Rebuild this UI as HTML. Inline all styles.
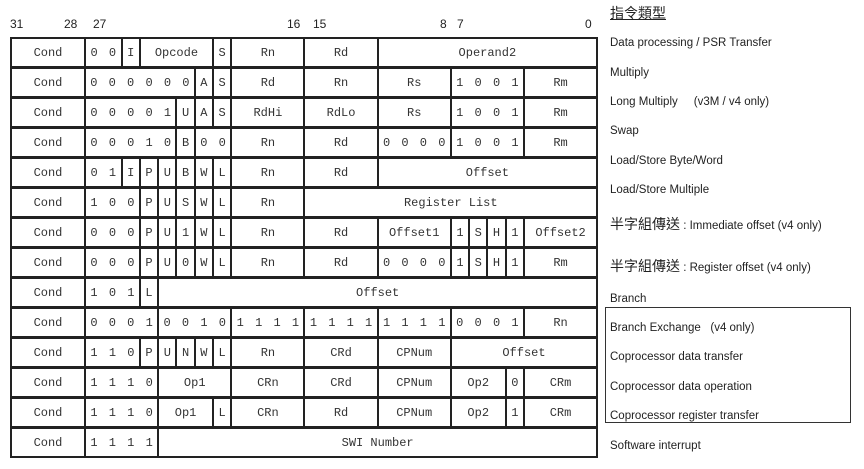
<!DOCTYPE html>
<html><head><meta charset="utf-8">
<style>
*{margin:0;padding:0;box-sizing:border-box}
body{width:864px;height:469px;background:#fff;position:relative;overflow:hidden;font-family:"Liberation Mono",monospace;color:#222}
.r{position:absolute;left:0;width:600px;height:31px}
.c{position:absolute;top:0;height:31px;border:2px solid #222;left:calc(85px + var(--a)*18.29px - 1px);width:calc((var(--b) - var(--a))*18.29px + 2px);display:flex;align-items:center;justify-content:center;font-size:12px;white-space:pre;color:#333}
.b{letter-spacing:2px;padding-left:2px}
.h{position:absolute;top:17px;font-family:"Liberation Sans",sans-serif;font-size:12px;color:#222}
.l{position:absolute;left:610px;font-family:"Liberation Sans","Noto Sans CJK TC",sans-serif;font-size:11.5px;color:#222;white-space:pre;line-height:14px}
.cj{font-size:14px}
</style></head><body>
<div class="h" style="left:10px">31</div>
<div class="h" style="left:64px">28</div>
<div class="h" style="left:93px">27</div>
<div class="h" style="left:287px">16</div>
<div class="h" style="left:313px">15</div>
<div class="h" style="left:440px">8</div>
<div class="h" style="left:457px">7</div>
<div class="h" style="left:585px">0</div>

<div class="r" style="top:37px">
<div class="c" style="--a:-4.046;--b:0">Cond</div>
<div class="c b" style="--a:0;--b:2">0 0</div>
<div class="c" style="--a:2;--b:3">I</div>
<div class="c" style="--a:3;--b:7">Opcode</div>
<div class="c" style="--a:7;--b:8">S</div>
<div class="c" style="--a:8;--b:12">Rn</div>
<div class="c" style="--a:12;--b:16">Rd</div>
<div class="c" style="--a:16;--b:28">Operand2</div>
</div>

<div class="r" style="top:67px">
<div class="c" style="--a:-4.046;--b:0">Cond</div>
<div class="c b" style="--a:0;--b:6">0 0 0 0 0 0</div>
<div class="c" style="--a:6;--b:7">A</div>
<div class="c" style="--a:7;--b:8">S</div>
<div class="c" style="--a:8;--b:12">Rd</div>
<div class="c" style="--a:12;--b:16">Rn</div>
<div class="c" style="--a:16;--b:20">Rs</div>
<div class="c b" style="--a:20;--b:24">1 0 0 1</div>
<div class="c" style="--a:24;--b:28">Rm</div>
</div>

<div class="r" style="top:97px">
<div class="c" style="--a:-4.046;--b:0">Cond</div>
<div class="c b" style="--a:0;--b:5">0 0 0 0 1</div>
<div class="c" style="--a:5;--b:6">U</div>
<div class="c" style="--a:6;--b:7">A</div>
<div class="c" style="--a:7;--b:8">S</div>
<div class="c" style="--a:8;--b:12">RdHi</div>
<div class="c" style="--a:12;--b:16">RdLo</div>
<div class="c" style="--a:16;--b:20">Rs</div>
<div class="c b" style="--a:20;--b:24">1 0 0 1</div>
<div class="c" style="--a:24;--b:28">Rm</div>
</div>

<div class="r" style="top:127px">
<div class="c" style="--a:-4.046;--b:0">Cond</div>
<div class="c b" style="--a:0;--b:5">0 0 0 1 0</div>
<div class="c" style="--a:5;--b:6">B</div>
<div class="c b" style="--a:6;--b:8">0 0</div>
<div class="c" style="--a:8;--b:12">Rn</div>
<div class="c" style="--a:12;--b:16">Rd</div>
<div class="c b" style="--a:16;--b:20">0 0 0 0</div>
<div class="c b" style="--a:20;--b:24">1 0 0 1</div>
<div class="c" style="--a:24;--b:28">Rm</div>
</div>

<div class="r" style="top:157px">
<div class="c" style="--a:-4.046;--b:0">Cond</div>
<div class="c b" style="--a:0;--b:2">0 1</div>
<div class="c" style="--a:2;--b:3">I</div>
<div class="c" style="--a:3;--b:4">P</div>
<div class="c" style="--a:4;--b:5">U</div>
<div class="c" style="--a:5;--b:6">B</div>
<div class="c" style="--a:6;--b:7">W</div>
<div class="c" style="--a:7;--b:8">L</div>
<div class="c" style="--a:8;--b:12">Rn</div>
<div class="c" style="--a:12;--b:16">Rd</div>
<div class="c" style="--a:16;--b:28">Offset</div>
</div>

<div class="r" style="top:187px">
<div class="c" style="--a:-4.046;--b:0">Cond</div>
<div class="c b" style="--a:0;--b:3">1 0 0</div>
<div class="c" style="--a:3;--b:4">P</div>
<div class="c" style="--a:4;--b:5">U</div>
<div class="c" style="--a:5;--b:6">S</div>
<div class="c" style="--a:6;--b:7">W</div>
<div class="c" style="--a:7;--b:8">L</div>
<div class="c" style="--a:8;--b:12">Rn</div>
<div class="c" style="--a:12;--b:28">Register List</div>
</div>

<div class="r" style="top:217px">
<div class="c" style="--a:-4.046;--b:0">Cond</div>
<div class="c b" style="--a:0;--b:3">0 0 0</div>
<div class="c" style="--a:3;--b:4">P</div>
<div class="c" style="--a:4;--b:5">U</div>
<div class="c" style="--a:5;--b:6">1</div>
<div class="c" style="--a:6;--b:7">W</div>
<div class="c" style="--a:7;--b:8">L</div>
<div class="c" style="--a:8;--b:12">Rn</div>
<div class="c" style="--a:12;--b:16">Rd</div>
<div class="c" style="--a:16;--b:20">Offset1</div>
<div class="c" style="--a:20;--b:21">1</div>
<div class="c" style="--a:21;--b:22">S</div>
<div class="c" style="--a:22;--b:23">H</div>
<div class="c" style="--a:23;--b:24">1</div>
<div class="c" style="--a:24;--b:28">Offset2</div>
</div>

<div class="r" style="top:247px">
<div class="c" style="--a:-4.046;--b:0">Cond</div>
<div class="c b" style="--a:0;--b:3">0 0 0</div>
<div class="c" style="--a:3;--b:4">P</div>
<div class="c" style="--a:4;--b:5">U</div>
<div class="c" style="--a:5;--b:6">0</div>
<div class="c" style="--a:6;--b:7">W</div>
<div class="c" style="--a:7;--b:8">L</div>
<div class="c" style="--a:8;--b:12">Rn</div>
<div class="c" style="--a:12;--b:16">Rd</div>
<div class="c b" style="--a:16;--b:20">0 0 0 0</div>
<div class="c" style="--a:20;--b:21">1</div>
<div class="c" style="--a:21;--b:22">S</div>
<div class="c" style="--a:22;--b:23">H</div>
<div class="c" style="--a:23;--b:24">1</div>
<div class="c" style="--a:24;--b:28">Rm</div>
</div>

<div class="r" style="top:277px">
<div class="c" style="--a:-4.046;--b:0">Cond</div>
<div class="c b" style="--a:0;--b:3">1 0 1</div>
<div class="c" style="--a:3;--b:4">L</div>
<div class="c" style="--a:4;--b:28">Offset</div>
</div>

<div class="r" style="top:307px">
<div class="c" style="--a:-4.046;--b:0">Cond</div>
<div class="c b" style="--a:0;--b:4">0 0 0 1</div>
<div class="c b" style="--a:4;--b:8">0 0 1 0</div>
<div class="c b" style="--a:8;--b:12">1 1 1 1</div>
<div class="c b" style="--a:12;--b:16">1 1 1 1</div>
<div class="c b" style="--a:16;--b:20">1 1 1 1</div>
<div class="c b" style="--a:20;--b:24">0 0 0 1</div>
<div class="c" style="--a:24;--b:28">Rn</div>
</div>

<div class="r" style="top:337px">
<div class="c" style="--a:-4.046;--b:0">Cond</div>
<div class="c b" style="--a:0;--b:3">1 1 0</div>
<div class="c" style="--a:3;--b:4">P</div>
<div class="c" style="--a:4;--b:5">U</div>
<div class="c" style="--a:5;--b:6">N</div>
<div class="c" style="--a:6;--b:7">W</div>
<div class="c" style="--a:7;--b:8">L</div>
<div class="c" style="--a:8;--b:12">Rn</div>
<div class="c" style="--a:12;--b:16">CRd</div>
<div class="c" style="--a:16;--b:20">CPNum</div>
<div class="c" style="--a:20;--b:28">Offset</div>
</div>

<div class="r" style="top:367px">
<div class="c" style="--a:-4.046;--b:0">Cond</div>
<div class="c b" style="--a:0;--b:4">1 1 1 0</div>
<div class="c" style="--a:4;--b:8">Op1</div>
<div class="c" style="--a:8;--b:12">CRn</div>
<div class="c" style="--a:12;--b:16">CRd</div>
<div class="c" style="--a:16;--b:20">CPNum</div>
<div class="c" style="--a:20;--b:23">Op2</div>
<div class="c" style="--a:23;--b:24">0</div>
<div class="c" style="--a:24;--b:28">CRm</div>
</div>

<div class="r" style="top:397px">
<div class="c" style="--a:-4.046;--b:0">Cond</div>
<div class="c b" style="--a:0;--b:4">1 1 1 0</div>
<div class="c" style="--a:4;--b:7">Op1</div>
<div class="c" style="--a:7;--b:8">L</div>
<div class="c" style="--a:8;--b:12">CRn</div>
<div class="c" style="--a:12;--b:16">Rd</div>
<div class="c" style="--a:16;--b:20">CPNum</div>
<div class="c" style="--a:20;--b:23">Op2</div>
<div class="c" style="--a:23;--b:24">1</div>
<div class="c" style="--a:24;--b:28">CRm</div>
</div>

<div class="r" style="top:427px">
<div class="c" style="--a:-4.046;--b:0">Cond</div>
<div class="c b" style="--a:0;--b:4">1 1 1 1</div>
<div class="c" style="--a:4;--b:28">SWI Number</div>
</div>

<div style="position:absolute;left:605px;top:307px;width:246px;height:116px;border:1px solid #333"></div>

<div class="l cj" style="top:6px;text-decoration:underline">指令類型</div>
<div class="l" style="top:36px">Data processing / PSR Transfer</div>
<div class="l" style="top:66px">Multiply</div>
<div class="l" style="top:95px">Long Multiply     (v3M / v4 only)</div>
<div class="l" style="top:124px">Swap</div>
<div class="l" style="top:154px">Load/Store Byte/Word</div>
<div class="l" style="top:183px">Load/Store Multiple</div>
<div class="l" style="top:217px"><span class="cj">半字組傳送</span> : Immediate offset (v4 only)</div>
<div class="l" style="top:259px"><span class="cj">半字組傳送</span> : Register offset (v4 only)</div>
<div class="l" style="top:292px">Branch</div>
<div class="l" style="top:321px">Branch Exchange   (v4 only)</div>
<div class="l" style="top:350px">Coprocessor data transfer</div>
<div class="l" style="top:380px">Coprocessor data operation</div>
<div class="l" style="top:409px">Coprocessor register transfer</div>
<div class="l" style="top:439px">Software interrupt</div>
</body></html>
